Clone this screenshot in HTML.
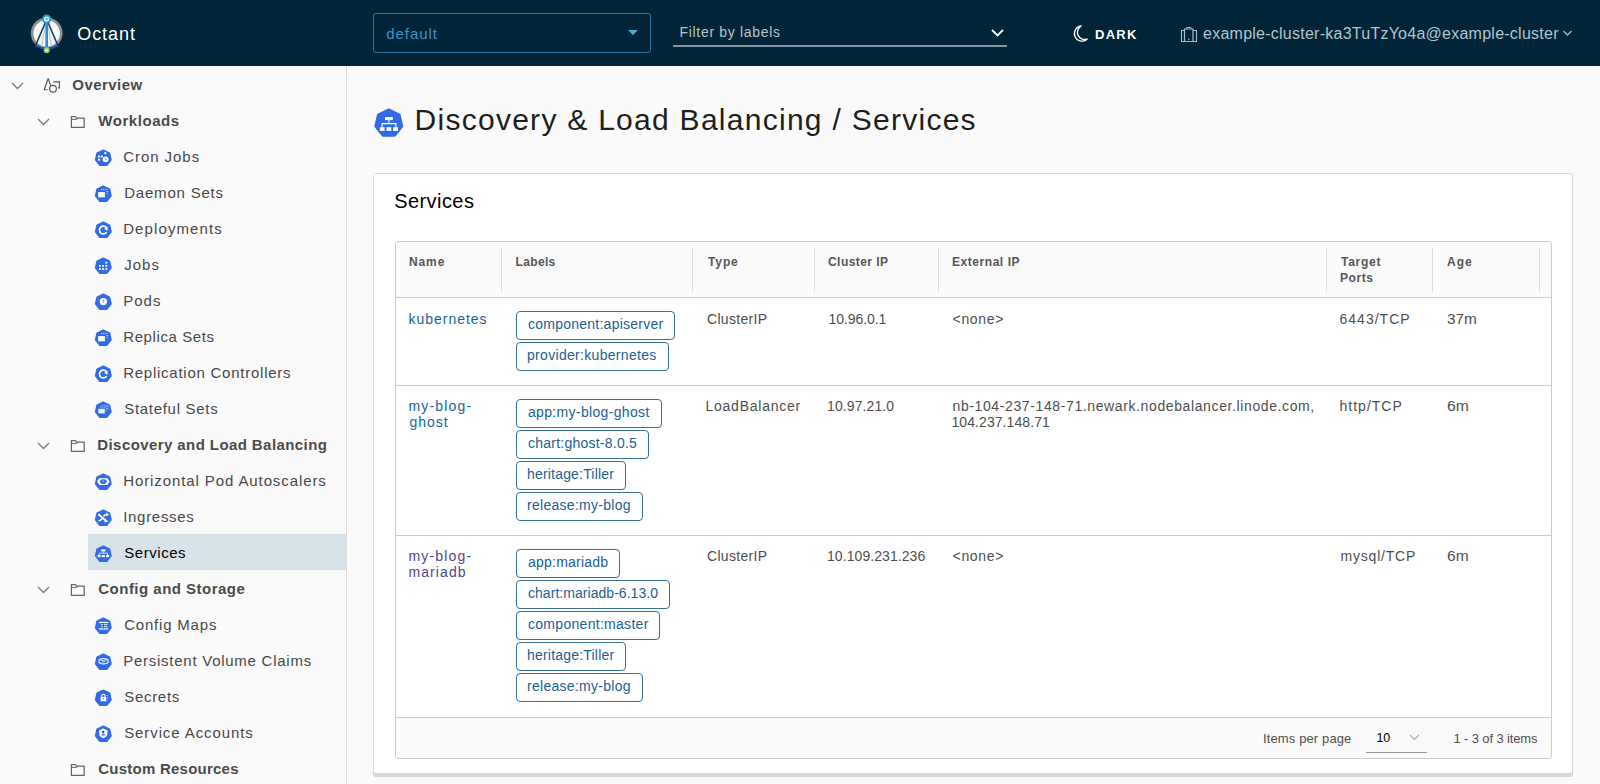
<!DOCTYPE html>
<html><head><meta charset="utf-8"><title>Octant</title>
<style>
*{box-sizing:border-box;margin:0;padding:0}
html,body{width:1600px;height:784px;overflow:hidden;background:#fafafa;font-family:"Liberation Sans",sans-serif;position:relative}
.abs{position:absolute}
.t{position:absolute;white-space:nowrap;line-height:1}
.lbl{position:absolute;height:29px;border:1px solid #36709a;border-radius:4px}
</style></head><body>
<div class="abs" style="left:0;top:0;width:1600px;height:66px;background:#002538"></div>
<svg class="abs" style="left:26px;top:10px" width="42" height="46" viewBox="0 0 42 46">
<circle cx="20.7" cy="23.3" r="14.6" fill="#f4f6f8" stroke="#8a8f96" stroke-width="2.6"/>
<path d="M20.7 9.5 L9.5 35.5 M20.7 9.5 L31.9 35.5" stroke="#1b3a5c" stroke-width="1.6" fill="none"/>
<path d="M20.7 9.5 L15.5 37 M20.7 9.5 L25.9 37" stroke="#9ab4cc" stroke-width=".7" fill="none"/>
<path d="M9.5 35.5 Q20.7 42 31.9 35.5" stroke="#1a4fa0" stroke-width="2.2" fill="none"/>
<line x1="20.7" y1="9" x2="20.7" y2="39" stroke="#2a8fd8" stroke-width="2.6"/>
<circle cx="20.7" cy="9" r="4.6" fill="#2a9ad8"/><circle cx="20.7" cy="9" r="2.6" fill="#e8fbff"/><circle cx="20.7" cy="9" r="1.1" fill="#4caf50"/>
<circle cx="20.7" cy="40.2" r="3" fill="#8fd46a"/><circle cx="20.7" cy="40.2" r="1.3" fill="#d9f5c0"/>
</svg>
<div class="t" id="octant" style="left:77.20px;top:24.56px;font-size:18px;color:#ffffff;letter-spacing:0.950px;">Octant</div>
<div class="abs" style="left:373px;top:13px;width:278px;height:40px;border:1px solid #2f77a3;border-radius:3px"></div>
<div class="t" id="default" style="left:386.20px;top:26.00px;font-size:15px;color:#3a93c6;letter-spacing:0.967px;">default</div>
<svg class="abs" style="left:627px;top:29px" width="12" height="7" viewBox="0 0 12 7"><path d="M1 1 L11 1 L6 6 Z" fill="#49afd9"/></svg>
<div class="t" id="filter" style="left:679.50px;top:25.35px;font-size:14px;color:#b8c4cc;letter-spacing:0.687px;">Filter by labels</div>
<div class="abs" style="left:673px;top:45px;width:334px;height:2px;background:#8396a3"></div>
<svg class="abs" style="left:990px;top:28px" width="15" height="10" viewBox="0 0 15 10"><path d="M2 2 L7.5 7.5 L13 2" stroke="#fff" stroke-width="1.8" fill="none"/></svg>
<svg class="abs" style="left:1072px;top:24px" width="18" height="19" viewBox="0 0 18 19"><path d="M9.5 2 A7.6 7.6 0 1 0 15.5 14.8 A6.4 6.4 0 0 1 9.5 2 Z" stroke="#fff" stroke-width="1.3" fill="none"/></svg>
<div class="t" id="dark" style="left:1095.00px;top:27.75px;font-size:13px;color:#ffffff;font-weight:bold;letter-spacing:1.284px;">DARK</div>
<svg class="abs" style="left:1180px;top:26px" width="18" height="17" viewBox="0 0 18 17"><path d="M4.5 3 H13 V15.5 H4.5 Z" stroke="#a9b9c4" stroke-width="1.2" fill="none"/><path d="M4.5 4.5 H1.5 V15.5 H4.5 M13 4.5 H16.5 V15.5 H13" stroke="#a9b9c4" stroke-width="1.1" fill="none"/><path d="M6.5 3 V1.5 H11 V3" stroke="#a9b9c4" stroke-width="1" fill="none"/><circle cx="8.75" cy="13.3" r=".8" fill="#a9b9c4"/></svg>
<div class="t" id="cluster" style="left:1203.00px;top:25.76px;font-size:16px;color:#b4c3cc;letter-spacing:0.250px;">example-cluster-ka3TuTzYo4a@example-cluster</div>
<svg class="abs" style="left:1562px;top:29px" width="11" height="8" viewBox="0 0 11 8"><path d="M1.5 2 L5.5 6 L9.5 2" stroke="#a9b9c4" stroke-width="1.3" fill="none"/></svg>
<div class="abs" style="left:0;top:66px;width:346px;height:718px;background:#fafafa"></div>
<div class="abs" style="left:346px;top:66px;width:1px;height:718px;background:#dcdcdc"></div>
<div class="abs" style="left:347px;top:66px;width:1px;height:718px;background:#ffffff"></div>
<div class="abs" style="left:88px;top:534px;width:258px;height:36px;background:#d8e3e9"></div>
<svg class="abs" style="left:11px;top:81.5px" width="13" height="8" viewBox="0 0 13 8"><path d="M1 1 L6.5 6.5 L12 1" stroke="#7a7a7a" stroke-width="1.3" fill="none"/></svg>
<svg class="abs" style="left:43px;top:77px" width="18" height="16" viewBox="0 0 18 16"><path d="M5.2 1.5 L1.2 12.7 H4.5" stroke="#575757" stroke-width="1.15" fill="none" stroke-linejoin="round"/><path d="M5.2 1.5 L7.7 8.6" stroke="#575757" stroke-width="1.15" fill="none"/><path d="M10.3 4.9 H16.4 V10.8 H15" stroke="#575757" stroke-width="1.15" fill="none"/><circle cx="10" cy="11.7" r="3.4" stroke="#575757" stroke-width="1.15" fill="none"/></svg>
<div class="t" id="nav0" style="left:72.30px;top:76.80px;font-size:15px;color:#4a4a4a;font-weight:bold;letter-spacing:0.450px;">Overview</div>
<svg class="abs" style="left:37px;top:118px" width="13" height="8" viewBox="0 0 13 8"><path d="M1 1 L6.5 6.5 L12 1" stroke="#7a7a7a" stroke-width="1.3" fill="none"/></svg>
<svg class="abs" style="left:70px;top:114px" width="16" height="15" viewBox="0 0 16 15"><path d="M1.4 2.6 H5.4 L6.9 4.1 H14.2 V13.3 H1.4 Z" stroke="#666666" stroke-width="1.25" fill="none" stroke-linejoin="round"/><path d="M1.4 5.4 H6.9 L7.9 4.1" stroke="#666666" stroke-width="1" fill="none"/></svg>
<div class="t" id="nav1" style="left:98.30px;top:112.80px;font-size:15px;color:#4a4a4a;font-weight:bold;letter-spacing:0.550px;">Workloads</div>
<svg class="abs" style="left:92px;top:146px" width="24" height="24" viewBox="0 0 24 24"><polygon points="11.30,4.10 17.55,7.11 19.10,13.88 14.77,19.31 7.83,19.31 3.50,13.88 5.05,7.11" fill="#326ce5" stroke="#326ce5" stroke-width="1.44" stroke-linejoin="round"/><rect x="6" y="9.6" width="2.1" height="1.9" fill="#ffffff"/><rect x="6" y="12.7" width="2.1" height="1.9" fill="#ffffff"/><rect x="9" y="9.6" width="1.9" height="1.9" fill="#ffffff"/><circle cx="13.3" cy="7.2" r="1.1" fill="#ffffff"/><circle cx="13.6" cy="13.3" r="2.9" fill="#ffffff"/><path d="M13.4 11.8 V13.6 H14.6" stroke="#326ce5" stroke-width=".6" fill="none"/></svg>
<div class="t" id="nav2" style="left:123.20px;top:148.80px;font-size:15px;color:#484848;letter-spacing:0.950px;">Cron Jobs</div>
<svg class="abs" style="left:92px;top:182px" width="24" height="24" viewBox="0 0 24 24"><polygon points="11.30,4.10 17.55,7.11 19.10,13.88 14.77,19.31 7.83,19.31 3.50,13.88 5.05,7.11" fill="#326ce5" stroke="#326ce5" stroke-width="1.44" stroke-linejoin="round"/><rect x="6.1" y="10.1" width="6.8" height="5.2" fill="#ffffff"/><path d="M9 7.6 H15.2 V13" stroke="#ffffff" stroke-width="1" stroke-dasharray="1 .9" fill="none" opacity=".85"/></svg>
<div class="t" id="nav3" style="left:124.20px;top:184.80px;font-size:15px;color:#484848;letter-spacing:0.800px;">Daemon Sets</div>
<svg class="abs" style="left:92px;top:218px" width="24" height="24" viewBox="0 0 24 24"><polygon points="11.30,4.10 17.55,7.11 19.10,13.88 14.77,19.31 7.83,19.31 3.50,13.88 5.05,7.11" fill="#326ce5" stroke="#326ce5" stroke-width="1.44" stroke-linejoin="round"/><path d="M14.6 14.1 A3.9 3.9 0 1 1 14.9 10.4" stroke="#ffffff" stroke-width="1.7" fill="none"/><path d="M12.2 10.5 L15.8 9.2 L15.3 13 Z" fill="#ffffff"/></svg>
<div class="t" id="nav4" style="left:123.20px;top:220.80px;font-size:15px;color:#484848;letter-spacing:1.100px;">Deployments</div>
<svg class="abs" style="left:92px;top:254px" width="24" height="24" viewBox="0 0 24 24"><polygon points="11.30,4.10 17.55,7.11 19.10,13.88 14.77,19.31 7.83,19.31 3.50,13.88 5.05,7.11" fill="#326ce5" stroke="#326ce5" stroke-width="1.44" stroke-linejoin="round"/><rect x="7" y="11" width="1.8" height="1.8" fill="#ffffff"/><rect x="7" y="14.1" width="1.8" height="1.8" fill="#ffffff"/><rect x="10.1" y="11" width="1.8" height="1.8" fill="#ffffff"/><rect x="10.1" y="14.1" width="1.8" height="1.8" fill="#ffffff"/><rect x="13.4" y="11" width="1.8" height="1.8" fill="#ffffff"/><rect x="13.4" y="14.1" width="1.8" height="1.8" fill="#ffffff"/><rect x="13.4" y="7.8" width="1.8" height="1.8" fill="#ffffff"/></svg>
<div class="t" id="nav5" style="left:124.20px;top:256.80px;font-size:15px;color:#484848;letter-spacing:1.031px;">Jobs</div>
<svg class="abs" style="left:92px;top:290px" width="24" height="24" viewBox="0 0 24 24"><polygon points="11.30,4.10 17.55,7.11 19.10,13.88 14.77,19.31 7.83,19.31 3.50,13.88 5.05,7.11" fill="#326ce5" stroke="#326ce5" stroke-width="1.44" stroke-linejoin="round"/><circle cx="11.4" cy="11.6" r="3.7" fill="#ffffff"/><path d="M10.6 10.3 H12.2 M11.4 10.3 V13" stroke="#6a7aa0" stroke-width=".6"/></svg>
<div class="t" id="nav6" style="left:123.20px;top:292.80px;font-size:15px;color:#484848;letter-spacing:1.034px;">Pods</div>
<svg class="abs" style="left:92px;top:326px" width="24" height="24" viewBox="0 0 24 24"><polygon points="11.30,4.10 17.55,7.11 19.10,13.88 14.77,19.31 7.83,19.31 3.50,13.88 5.05,7.11" fill="#326ce5" stroke="#326ce5" stroke-width="1.44" stroke-linejoin="round"/><rect x="6.1" y="10.1" width="6.8" height="5.2" fill="#ffffff"/><path d="M9 7.6 H15.2 V13" stroke="#ffffff" stroke-width="1" stroke-dasharray="1 .9" fill="none" opacity=".85"/></svg>
<div class="t" id="nav7" style="left:123.20px;top:328.80px;font-size:15px;color:#484848;letter-spacing:0.610px;">Replica Sets</div>
<svg class="abs" style="left:92px;top:362px" width="24" height="24" viewBox="0 0 24 24"><polygon points="11.30,4.10 17.55,7.11 19.10,13.88 14.77,19.31 7.83,19.31 3.50,13.88 5.05,7.11" fill="#326ce5" stroke="#326ce5" stroke-width="1.44" stroke-linejoin="round"/><path d="M14.6 14.1 A3.9 3.9 0 1 1 14.9 10.4" stroke="#ffffff" stroke-width="1.7" fill="none"/><path d="M12.2 10.5 L15.8 9.2 L15.3 13 Z" fill="#ffffff"/></svg>
<div class="t" id="nav8" style="left:123.20px;top:364.80px;font-size:15px;color:#484848;letter-spacing:0.748px;">Replication Controllers</div>
<svg class="abs" style="left:92px;top:398px" width="24" height="24" viewBox="0 0 24 24"><polygon points="11.30,4.10 17.55,7.11 19.10,13.88 14.77,19.31 7.83,19.31 3.50,13.88 5.05,7.11" fill="#326ce5" stroke="#326ce5" stroke-width="1.44" stroke-linejoin="round"/><rect x="6.3" y="10.8" width="6.5" height="4.6" fill="#ffffff" opacity=".9"/><path d="M8 9 H14.3 V13.6" stroke="#ffffff" stroke-width=".9" stroke-dasharray="1 .8" fill="none" opacity=".8"/><path d="M9.8 7.3 H16 V11.8" stroke="#ffffff" stroke-width=".8" stroke-dasharray="1 .8" fill="none" opacity=".7"/></svg>
<div class="t" id="nav9" style="left:124.20px;top:400.80px;font-size:15px;color:#484848;letter-spacing:0.701px;">Stateful Sets</div>
<svg class="abs" style="left:37px;top:442px" width="13" height="8" viewBox="0 0 13 8"><path d="M1 1 L6.5 6.5 L12 1" stroke="#7a7a7a" stroke-width="1.3" fill="none"/></svg>
<svg class="abs" style="left:70px;top:438px" width="16" height="15" viewBox="0 0 16 15"><path d="M1.4 2.6 H5.4 L6.9 4.1 H14.2 V13.3 H1.4 Z" stroke="#666666" stroke-width="1.25" fill="none" stroke-linejoin="round"/><path d="M1.4 5.4 H6.9 L7.9 4.1" stroke="#666666" stroke-width="1" fill="none"/></svg>
<div class="t" id="nav10" style="left:97.30px;top:436.80px;font-size:15px;color:#4a4a4a;font-weight:bold;letter-spacing:0.414px;">Discovery and Load Balancing</div>
<svg class="abs" style="left:92px;top:470px" width="24" height="24" viewBox="0 0 24 24"><polygon points="11.30,4.10 17.55,7.11 19.10,13.88 14.77,19.31 7.83,19.31 3.50,13.88 5.05,7.11" fill="#326ce5" stroke="#326ce5" stroke-width="1.44" stroke-linejoin="round"/><path d="M5 11.6 L7.3 8.3 H15.3 L17.6 11.6 L15.3 15 H7.3 Z" fill="#ffffff"/><ellipse cx="11.3" cy="11.6" rx="3.4" ry="2.3" fill="#326ce5"/><path d="M10.3 10.6 H12.3 L11.3 12.8 Z" fill="#9db7f0"/></svg>
<div class="t" id="nav11" style="left:123.20px;top:472.80px;font-size:15px;color:#484848;letter-spacing:0.900px;">Horizontal Pod Autoscalers</div>
<svg class="abs" style="left:92px;top:506px" width="24" height="24" viewBox="0 0 24 24"><polygon points="11.30,4.10 17.55,7.11 19.10,13.88 14.77,19.31 7.83,19.31 3.50,13.88 5.05,7.11" fill="#326ce5" stroke="#326ce5" stroke-width="1.44" stroke-linejoin="round"/><path d="M6.4 8.2 L14.2 15" stroke="#ffffff" stroke-width="1.8" fill="none"/><path d="M13 12.8 L16.6 15.6 L12.6 16.4 Z" fill="#ffffff"/><path d="M6.6 14.8 Q9 14.6 10.2 12.6" stroke="#ffffff" stroke-width="1.7" fill="none"/><path d="M11.6 10.4 Q12.6 8.6 14.4 8.6" stroke="#ffffff" stroke-width="1.7" fill="none"/><path d="M14 6.4 L17.2 8.6 L14 10.6 Z" fill="#ffffff"/></svg>
<div class="t" id="nav12" style="left:123.20px;top:508.80px;font-size:15px;color:#484848;letter-spacing:0.705px;">Ingresses</div>
<svg class="abs" style="left:92px;top:542px" width="24" height="24" viewBox="0 0 24 24"><polygon points="11.30,4.10 17.55,7.11 19.10,13.88 14.77,19.31 7.83,19.31 3.50,13.88 5.05,7.11" fill="#326ce5" stroke="#326ce5" stroke-width="1.44" stroke-linejoin="round"/><rect x="9.2" y="7.4" width="4.3" height="2" fill="#ffffff"/><path d="M11.35 9.4 V11.2 M7.1 13 V11.2 H15.6 V13" stroke="#ffffff" stroke-width=".8" fill="none"/><rect x="5.6" y="13" width="3" height="2.2" fill="#ffffff"/><rect x="9.85" y="13" width="3" height="2.2" fill="#ffffff"/><rect x="14.1" y="13" width="3" height="2.2" fill="#ffffff"/></svg>
<div class="t" id="nav13" style="left:124.20px;top:544.80px;font-size:15px;color:#000000;letter-spacing:0.558px;">Services</div>
<svg class="abs" style="left:37px;top:586px" width="13" height="8" viewBox="0 0 13 8"><path d="M1 1 L6.5 6.5 L12 1" stroke="#7a7a7a" stroke-width="1.3" fill="none"/></svg>
<svg class="abs" style="left:70px;top:582px" width="16" height="15" viewBox="0 0 16 15"><path d="M1.4 2.6 H5.4 L6.9 4.1 H14.2 V13.3 H1.4 Z" stroke="#666666" stroke-width="1.25" fill="none" stroke-linejoin="round"/><path d="M1.4 5.4 H6.9 L7.9 4.1" stroke="#666666" stroke-width="1" fill="none"/></svg>
<div class="t" id="nav14" style="left:98.30px;top:580.80px;font-size:15px;color:#4a4a4a;font-weight:bold;letter-spacing:0.480px;">Config and Storage</div>
<svg class="abs" style="left:92px;top:614px" width="24" height="24" viewBox="0 0 24 24"><polygon points="11.30,4.10 17.55,7.11 19.10,13.88 14.77,19.31 7.83,19.31 3.50,13.88 5.05,7.11" fill="#326ce5" stroke="#326ce5" stroke-width="1.44" stroke-linejoin="round"/><rect x="7" y="7.9" width="9.3" height="1.2" fill="#ffffff"/><rect x="9" y="10.1" width="6.5" height="1" fill="#ffffff" opacity=".85"/><rect x="9" y="12.2" width="6.5" height="1" fill="#ffffff" opacity=".85"/><rect x="7" y="14.3" width="9.3" height="1.2" fill="#ffffff"/><rect x="10.9" y="9" width=".8" height="5.4" fill="#1b3f9a"/></svg>
<div class="t" id="nav15" style="left:124.20px;top:616.80px;font-size:15px;color:#484848;letter-spacing:0.800px;">Config Maps</div>
<svg class="abs" style="left:92px;top:650px" width="24" height="24" viewBox="0 0 24 24"><polygon points="11.30,4.10 17.55,7.11 19.10,13.88 14.77,19.31 7.83,19.31 3.50,13.88 5.05,7.11" fill="#326ce5" stroke="#326ce5" stroke-width="1.44" stroke-linejoin="round"/><ellipse cx="11.5" cy="11.3" rx="4.6" ry="2.6" stroke="#ffffff" stroke-width="1.2" fill="none" opacity=".9"/><path d="M9.2 10.6 H13.8 M9.6 12 H13.2" stroke="#ffffff" stroke-width=".8" opacity=".8"/></svg>
<div class="t" id="nav16" style="left:123.20px;top:652.80px;font-size:15px;color:#484848;letter-spacing:0.742px;">Persistent Volume Claims</div>
<svg class="abs" style="left:92px;top:686px" width="24" height="24" viewBox="0 0 24 24"><polygon points="11.30,4.10 17.55,7.11 19.10,13.88 14.77,19.31 7.83,19.31 3.50,13.88 5.05,7.11" fill="#326ce5" stroke="#326ce5" stroke-width="1.44" stroke-linejoin="round"/><rect x="8.6" y="11" width="5.6" height="4.3" fill="#ffffff"/><path d="M9.8 11 V9.8 A1.6 1.6 0 0 1 13 9.8 V11" stroke="#ffffff" stroke-width="1.1" fill="none"/><path d="M14.6 9.5 H16 M14.8 11.8 H16.2 M14.8 13.9 H16" stroke="#ffffff" stroke-width=".7" opacity=".7"/><circle cx="11.4" cy="12.6" r=".6" fill="#326ce5"/></svg>
<div class="t" id="nav17" style="left:124.20px;top:688.80px;font-size:15px;color:#484848;letter-spacing:0.701px;">Secrets</div>
<svg class="abs" style="left:92px;top:722px" width="24" height="24" viewBox="0 0 24 24"><polygon points="11.30,4.10 17.55,7.11 19.10,13.88 14.77,19.31 7.83,19.31 3.50,13.88 5.05,7.11" fill="#326ce5" stroke="#326ce5" stroke-width="1.44" stroke-linejoin="round"/><path d="M11.3 6.6 L15.4 8.2 V11.8 C15.4 14 13.6 15.4 11.3 16.2 C9 15.4 7.2 14 7.2 11.8 V8.2 Z" fill="#ffffff"/><circle cx="11.3" cy="10" r="1.2" fill="#1b3f9a"/><path d="M9.3 13.6 C9.3 11.5 13.3 11.5 13.3 13.6 Z" fill="#326ce5"/></svg>
<div class="t" id="nav18" style="left:124.20px;top:724.80px;font-size:15px;color:#484848;letter-spacing:0.899px;">Service Accounts</div>
<svg class="abs" style="left:70px;top:762px" width="16" height="15" viewBox="0 0 16 15"><path d="M1.4 2.6 H5.4 L6.9 4.1 H14.2 V13.3 H1.4 Z" stroke="#666666" stroke-width="1.25" fill="none" stroke-linejoin="round"/><path d="M1.4 5.4 H6.9 L7.9 4.1" stroke="#666666" stroke-width="1" fill="none"/></svg>
<div class="t" id="nav19" style="left:98.30px;top:760.80px;font-size:15px;color:#4a4a4a;font-weight:bold;letter-spacing:0.233px;">Custom Resources</div>
<svg class="abs" style="left:374px;top:108px" width="30" height="30" viewBox="0 0 30 30"><polygon points="14.80,1.70 25.43,6.82 28.06,18.33 20.70,27.55 8.90,27.55 1.54,18.33 4.17,6.82" fill="#326ce5" stroke="#326ce5" stroke-width="2.45" stroke-linejoin="round"/><rect x="11" y="9" width="7.8" height="3.1" fill="#fff"/><path d="M14.9 12.1 V15.8 M8.1 19.2 V15.6 H21.9 V19.2" stroke="#fff" stroke-width="1.1" fill="none"/><rect x="5.8" y="19.2" width="4.8" height="3.7" fill="#fff"/><rect x="12.5" y="19.2" width="4.8" height="3.7" fill="#fff"/><rect x="19.2" y="19.2" width="4.8" height="3.7" fill="#fff"/></svg>
<div class="t" id="title" style="left:414.50px;top:104.91px;font-size:30px;color:#1e1e1e;letter-spacing:1.274px;">Discovery &amp; Load Balancing / Services</div>
<div class="abs" style="left:373px;top:173px;width:1200px;height:601px;background:#fff;border:1px solid #d7d7d7;border-radius:3px;box-shadow:0 3px 0 0 #d7d7d7"></div>
<div class="t" id="cardtitle" style="left:394.20px;top:190.57px;font-size:20px;color:#000000;letter-spacing:0.433px;">Services</div>
<div class="abs" style="left:395px;top:241px;width:1157px;height:518px;border:1px solid #cccccc;border-radius:3px;background:#fff"></div>
<div class="abs" style="left:396px;top:242px;width:1155px;height:56px;background:#fafafa;border-bottom:1px solid #cccccc;border-radius:2px 2px 0 0"></div>
<div class="abs" style="left:501px;top:248px;width:1px;height:44px;background:#dddddd"></div>
<div class="abs" style="left:692px;top:248px;width:1px;height:44px;background:#dddddd"></div>
<div class="abs" style="left:814px;top:248px;width:1px;height:44px;background:#dddddd"></div>
<div class="abs" style="left:938px;top:248px;width:1px;height:44px;background:#dddddd"></div>
<div class="abs" style="left:1326px;top:248px;width:1px;height:44px;background:#dddddd"></div>
<div class="abs" style="left:1432px;top:248px;width:1px;height:44px;background:#dddddd"></div>
<div class="abs" style="left:1539px;top:248px;width:1px;height:44px;background:#dddddd"></div>
<div class="t" id="h_Name" style="left:409.00px;top:256.34px;font-size:12px;color:#565656;font-weight:bold;letter-spacing:0.884px;">Name</div>
<div class="t" id="h_Labels" style="left:515.50px;top:256.34px;font-size:12px;color:#565656;font-weight:bold;letter-spacing:0.350px;">Labels</div>
<div class="t" id="h_Type" style="left:708.00px;top:256.34px;font-size:12px;color:#565656;font-weight:bold;letter-spacing:0.882px;">Type</div>
<div class="t" id="h_ClusterIP" style="left:828.00px;top:256.34px;font-size:12px;color:#565656;font-weight:bold;letter-spacing:0.442px;">Cluster IP</div>
<div class="t" id="h_ExternalIP" style="left:952.00px;top:256.34px;font-size:12px;color:#565656;font-weight:bold;letter-spacing:0.550px;">External IP</div>
<div class="t" id="h_Target" style="left:1341.00px;top:256.34px;font-size:12px;color:#565656;font-weight:bold;letter-spacing:0.750px;">Target</div>
<div class="t" id="h_Age" style="left:1447.00px;top:256.34px;font-size:12px;color:#565656;font-weight:bold;letter-spacing:1.050px;">Age</div>
<div class="t" id="h_ports" style="left:1340.00px;top:271.84px;font-size:12px;color:#565656;font-weight:bold;letter-spacing:0.550px;">Ports</div>
<div class="abs" style="left:396px;top:385px;width:1155px;height:1px;background:#cccccc"></div>
<div class="abs" style="left:396px;top:535px;width:1155px;height:1px;background:#cccccc"></div>
<div class="abs" style="left:396px;top:717px;width:1155px;height:41px;background:#fafafa;border-top:1px solid #cccccc;border-radius:0 0 2px 2px"></div>
<div class="t" id="r1name" style="left:408.50px;top:311.65px;font-size:14px;color:#15659a;letter-spacing:0.973px;">kubernetes</div>
<div class="lbl" style="left:516px;top:311px;width:159px"></div>
<div class="t" id="l1a" style="left:528.00px;top:317.35px;font-size:14px;color:#1c6194;letter-spacing:0.244px;">component:apiserver</div>
<div class="lbl" style="left:516px;top:342px;width:153px"></div>
<div class="t" id="l1b" style="left:527.00px;top:348.35px;font-size:14px;color:#1c6194;letter-spacing:0.311px;">provider:kubernetes</div>
<div class="t" id="r1type" style="left:707.00px;top:311.65px;font-size:14px;color:#4e4e4e;letter-spacing:0.300px;">ClusterIP</div>
<div class="t" id="r1ip" style="left:828.50px;top:311.65px;font-size:14px;color:#4e4e4e;letter-spacing:-0.060px;">10.96.0.1</div>
<div class="t" id="r1ext" style="left:952.50px;top:311.65px;font-size:14px;color:#4e4e4e;letter-spacing:0.700px;">&lt;none&gt;</div>
<div class="t" id="r1port" style="left:1339.50px;top:311.65px;font-size:14px;color:#4e4e4e;letter-spacing:1.015px;">6443/TCP</div>
<div class="t" id="r1age" style="left:1446.50px;top:311.65px;font-size:14px;color:#4e4e4e;transform:scaleX(1.0970);transform-origin:0 0;">37m</div>
<div class="t" id="r2n1" style="left:408.50px;top:399.45px;font-size:14px;color:#15659a;letter-spacing:1.177px;">my-blog-</div>
<div class="t" id="r2n2" style="left:409.50px;top:415.05px;font-size:14px;color:#15659a;letter-spacing:1.000px;">ghost</div>
<div class="lbl" style="left:516px;top:399px;width:146px"></div>
<div class="t" id="l20" style="left:528.00px;top:405.35px;font-size:14px;color:#1c6194;letter-spacing:0.337px;">app:my-blog-ghost</div>
<div class="lbl" style="left:516px;top:430px;width:133px"></div>
<div class="t" id="l21" style="left:528.00px;top:436.35px;font-size:14px;color:#1c6194;letter-spacing:0.237px;">chart:ghost-8.0.5</div>
<div class="lbl" style="left:516px;top:461px;width:110px"></div>
<div class="t" id="l22" style="left:527.00px;top:467.35px;font-size:14px;color:#1c6194;letter-spacing:0.186px;">heritage:Tiller</div>
<div class="lbl" style="left:516px;top:492px;width:127px"></div>
<div class="t" id="l23" style="left:527.00px;top:498.35px;font-size:14px;color:#1c6194;letter-spacing:0.286px;">release:my-blog</div>
<div class="t" id="r2type" style="left:705.50px;top:399.45px;font-size:14px;color:#4e4e4e;letter-spacing:0.753px;">LoadBalancer</div>
<div class="t" id="r2ip" style="left:827.00px;top:399.45px;font-size:14px;color:#4e4e4e;letter-spacing:0.108px;">10.97.21.0</div>
<div class="t" id="r2ext1" style="left:952.50px;top:399.45px;font-size:14px;color:#4e4e4e;letter-spacing:0.613px;">nb-104-237-148-71.newark.nodebalancer.linode.com,</div>
<div class="t" id="r2ext2" style="left:951.50px;top:415.05px;font-size:14px;color:#4e4e4e;letter-spacing:0.074px;">104.237.148.71</div>
<div class="t" id="r2port" style="left:1339.50px;top:399.45px;font-size:14px;color:#4e4e4e;letter-spacing:1.011px;">http/TCP</div>
<div class="t" id="r2age" style="left:1446.50px;top:399.45px;font-size:14px;color:#4e4e4e;transform:scaleX(1.1170);transform-origin:0 0;">6m</div>
<div class="t" id="r3n1" style="left:408.50px;top:549.45px;font-size:14px;color:#4d4890;letter-spacing:1.179px;">my-blog-</div>
<div class="t" id="r3n2" style="left:408.50px;top:565.05px;font-size:14px;color:#4d4890;letter-spacing:1.082px;">mariadb</div>
<div class="lbl" style="left:516px;top:549px;width:104px"></div>
<div class="t" id="l30" style="left:528.00px;top:555.35px;font-size:14px;color:#1c6194;letter-spacing:0.220px;">app:mariadb</div>
<div class="lbl" style="left:516px;top:580px;width:154px"></div>
<div class="t" id="l31" style="left:528.00px;top:586.35px;font-size:14px;color:#1c6194;letter-spacing:0.042px;">chart:mariadb-6.13.0</div>
<div class="lbl" style="left:516px;top:611px;width:144px"></div>
<div class="t" id="l32" style="left:528.00px;top:617.35px;font-size:14px;color:#1c6194;letter-spacing:0.293px;">component:master</div>
<div class="lbl" style="left:516px;top:642px;width:110px"></div>
<div class="t" id="l33" style="left:527.00px;top:648.35px;font-size:14px;color:#1c6194;letter-spacing:0.200px;">heritage:Tiller</div>
<div class="lbl" style="left:516px;top:673px;width:127px"></div>
<div class="t" id="l34" style="left:527.00px;top:679.35px;font-size:14px;color:#1c6194;letter-spacing:0.286px;">release:my-blog</div>
<div class="t" id="r3type" style="left:707.00px;top:549.45px;font-size:14px;color:#4e4e4e;letter-spacing:0.300px;">ClusterIP</div>
<div class="t" id="r3ip" style="left:827.00px;top:549.45px;font-size:14px;color:#4e4e4e;letter-spacing:0.073px;">10.109.231.236</div>
<div class="t" id="r3ext" style="left:952.50px;top:549.45px;font-size:14px;color:#4e4e4e;letter-spacing:0.700px;">&lt;none&gt;</div>
<div class="t" id="r3port" style="left:1340.50px;top:549.45px;font-size:14px;color:#4e4e4e;letter-spacing:0.800px;">mysql/TCP</div>
<div class="t" id="r3age" style="left:1446.50px;top:549.45px;font-size:14px;color:#4e4e4e;transform:scaleX(1.1140);transform-origin:0 0;">6m</div>
<div class="t" id="f_items" style="left:1263.00px;top:732.00px;font-size:13px;color:#4e4e4e;letter-spacing:0.126px;">Items per page</div>
<div class="t" id="f_10" style="left:1376.50px;top:732.42px;font-size:12.5px;color:#000000;letter-spacing:-0.200px;">10</div>
<div class="abs" style="left:1366px;top:752px;width:61px;height:1px;background:#9a9a9a"></div>
<svg class="abs" style="left:1408px;top:733px" width="13" height="9" viewBox="0 0 13 9"><path d="M2 2 L6.5 6.5 L11 2" stroke="#aaaaaa" stroke-width="1.1" fill="none"/></svg>
<div class="t" id="f_range" style="left:1453.50px;top:732.00px;font-size:13px;color:#4e4e4e;letter-spacing:-0.133px;">1 - 3 of 3 items</div>
</body></html>
